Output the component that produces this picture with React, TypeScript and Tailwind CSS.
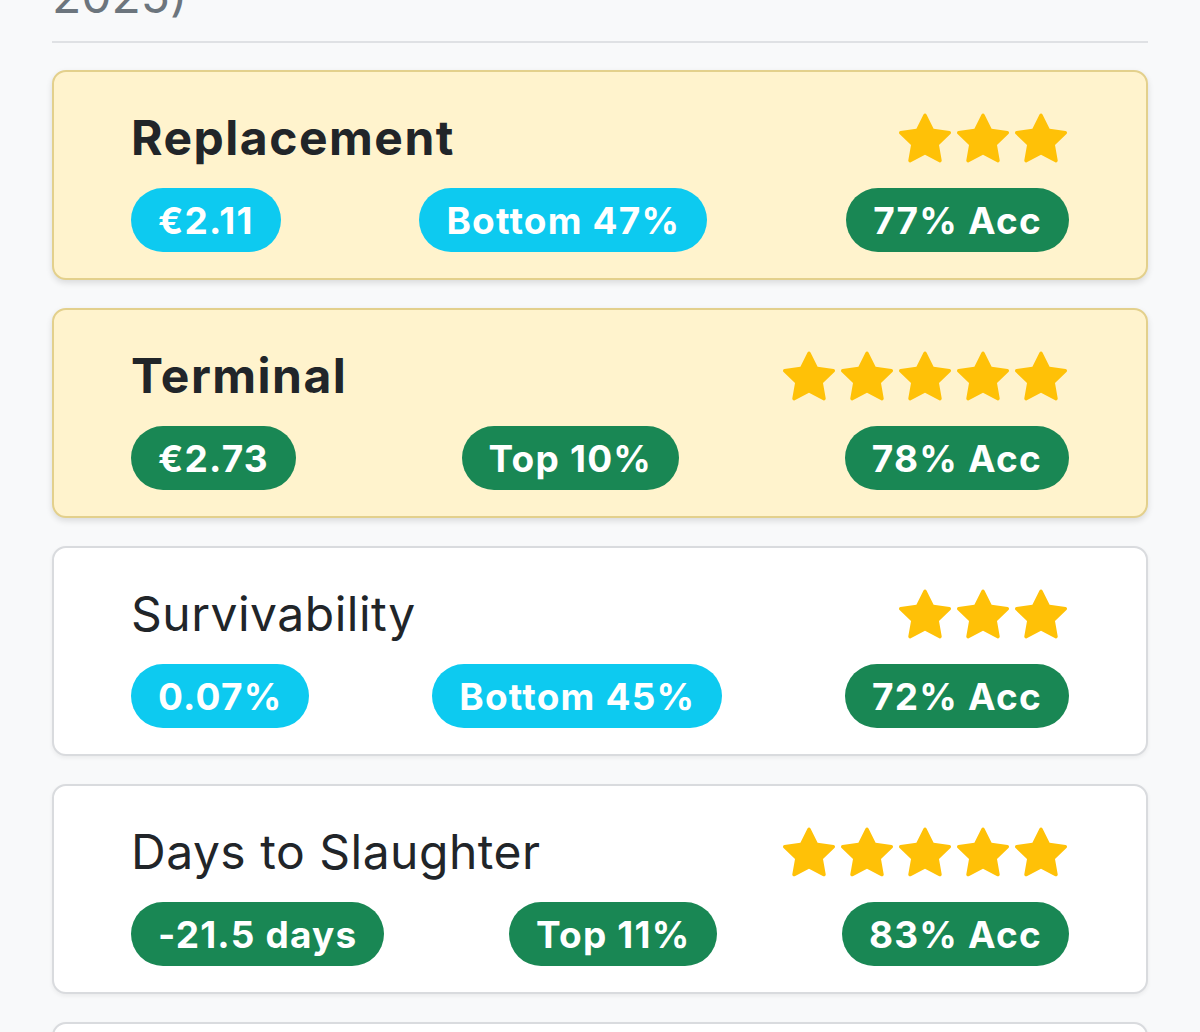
import React from "react";

type Trait = {
	name: string;
	bold: boolean;
	highlight: boolean;
	stars: number;
	value: string;
	valueTone: "info" | "success";
	rank: string;
	rankTone: "info" | "success";
	acc: string;
}

const traits: Trait[] = [
	{name: "Replacement", bold: true, highlight: true, stars: 3, value: "€2.11", valueTone: "info", rank: "Bottom 47%", rankTone: "info", acc: "77% Acc"},
	{name: "Terminal", bold: true, highlight: true, stars: 5, value: "€2.73", valueTone: "success", rank: "Top 10%", rankTone: "success", acc: "78% Acc"},
	{name: "Survivability", bold: false, highlight: false, stars: 3, value: "0.07%", valueTone: "info", rank: "Bottom 45%", rankTone: "info", acc: "72% Acc"},
	{name: "Days to Slaughter", bold: false, highlight: false, stars: 5, value: "-21.5 days", valueTone: "success", rank: "Top 11%", rankTone: "success", acc: "83% Acc"},
	{name: "Carcass Weight", bold: false, highlight: false, stars: 4, value: "1.2 kg", valueTone: "success", rank: "Top 20%", rankTone: "success", acc: "80% Acc"},
]

const Star = () => (
	<svg viewBox="0 0 16 16" className="w-[52px] h-[52px] text-[#ffc107]" fill="currentColor">
		<path d="M3.612 15.443c-.386.198-.824-.149-.746-.592l.83-4.73L.173 6.765c-.329-.314-.158-.888.283-.95l4.898-.696L7.538.792c.197-.39.73-.39.927 0l2.184 4.327 4.898.696c.441.062.612.636.282.95l-3.522 3.356.83 4.73c.078.443-.36.79-.746.592L8 13.187l-4.389 2.256z"/>
	</svg>
)

const Badge = ({tone, children}: {tone: "info" | "success"; children: React.ReactNode}) => (
	<span
		className={
			"h-[64px] px-[27px] rounded-full flex items-center text-[37px] font-bold tracking-[1.2px] text-white leading-none " +
			(tone === "info" ? "bg-[#0dcaf0]" : "bg-[#198754]")
		}>
		{children}
	</span>
)

const TraitCard = ({trait}: {trait: Trait}) => (
	<div
		className={
			"rounded-[14px] border-2 px-[77px] pt-[38px] pb-[26px] flex flex-col gap-[22px] " +
			(trait.highlight
				? "bg-[#fff3cd] border-[#e3d08c] shadow-[0_3px_6px_rgba(0,0,0,0.12)]"
				: "bg-white border-[#d9dbde] shadow-[0_2px_4px_rgba(0,0,0,0.06)]")
		}>
		<div className="flex items-center justify-between h-[56px]">
			<h3
				className={
					"text-[48px] leading-[56px] text-[#212529] " +
					(trait.bold ? "font-bold tracking-[1.5px]" : "font-normal tracking-[0.5px]")
				}>
				{trait.name}
			</h3>
			<div className="flex gap-[6px] mr-[2px]">
				{Array.from({length: trait.stars}).map((_, i) => <Star key={i}/>)}
			</div>
		</div>
		<div className="flex justify-between items-center">
			<Badge tone={trait.valueTone}>{trait.value}</Badge>
			<Badge tone={trait.rankTone}>{trait.rank}</Badge>
			<Badge tone="success">{trait.acc}</Badge>
		</div>
	</div>
)

const App = () => {
	return (
		<div className="h-[1032px] overflow-hidden bg-[#f8f9fa] px-[52px] font-['Inter',sans-serif]">
			<p className="mt-[-28px] text-[48px] leading-none text-[#6c757d]">2025)</p>
			<div className="mt-[21px] h-[2px] bg-[#dfe1e4]"/>
			<div className="mt-[27px] flex flex-col gap-[28px]">
				{traits.map(t => <TraitCard key={t.name} trait={t}/>)}
			</div>
		</div>
	)
}

export default App;
